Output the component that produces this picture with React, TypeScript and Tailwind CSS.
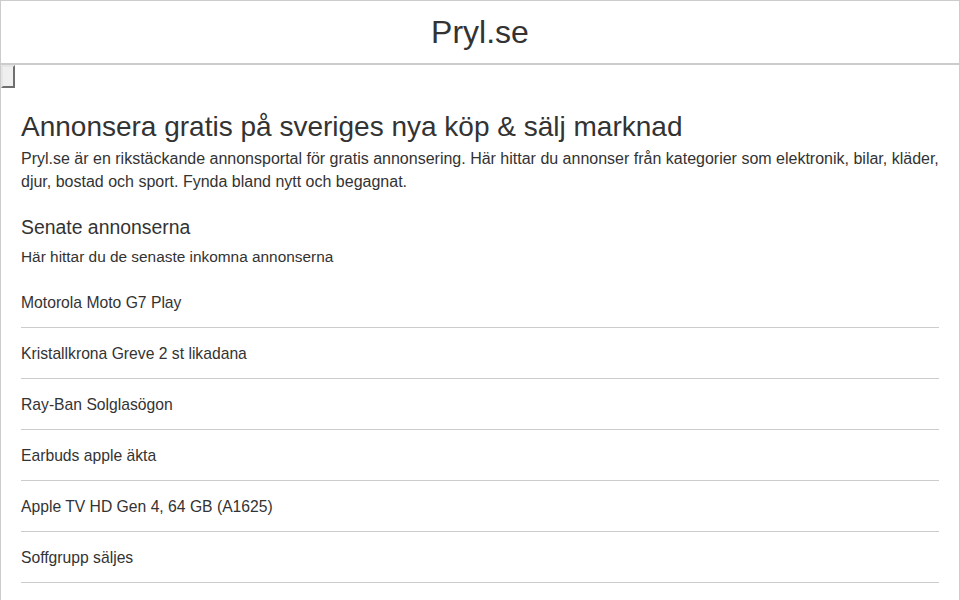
export default function App() {
  const items = [
    "Motorola Moto G7 Play",
    "Kristallkrona Greve 2 st likadana",
    "Ray-Ban Solglasögon",
    "Earbuds apple äkta",
    "Apple TV HD Gen 4, 64 GB (A1625)",
    "Soffgrupp säljes",
  ]

  return (
    <div className="min-h-screen bg-white border-x border-t border-[#ccc] text-[#333] font-['Liberation_Sans',Arial,sans-serif]">
      {/* Header */}
      <header className="h-[64px] border-b-2 border-[#ccc] flex items-center justify-center">
        <h1 className="text-[32px] leading-none pb-[1px]">Pryl.se</h1>
      </header>

      {/* Empty button */}
      <button
        type="button"
        className="block w-[14px] h-[23px] bg-[#efefef] border-2 border-t-[#e6e6e6] border-l-[#e6e6e6] border-r-[#6f6f6f] border-b-[#6f6f6f]"
      ></button>

      {/* Content */}
      <main className="px-[20px]">
        <h2 className="text-[28px] leading-[32px] mt-[23px]">Annonsera gratis på sveriges nya köp &amp; sälj marknad</h2>
        <p className="text-[16px] leading-[23px] mt-[4px]">
          Pryl.se är en rikstäckande annonsportal för gratis annonsering. Här hittar du annonser från kategorier som elektronik, bilar, kläder, djur, bostad och sport. Fynda bland nytt och begagnat.
        </p>

        <h3 className="text-[19.4px] leading-[24px] mt-[22px]">Senate annonserna</h3>
        <p className="text-[15.4px] leading-[20px] mt-[8px]">Här hittar du de senaste inkomna annonserna</p>

        <ul className="mt-[10px]">
          {items.map((item) => (
            <li key={item} className="pt-[16px] pb-[14px] leading-[20px] text-[15.7px] border-b border-[#ccc]">
              {item}
            </li>
          ))}
        </ul>
      </main>
    </div>
  )
}
